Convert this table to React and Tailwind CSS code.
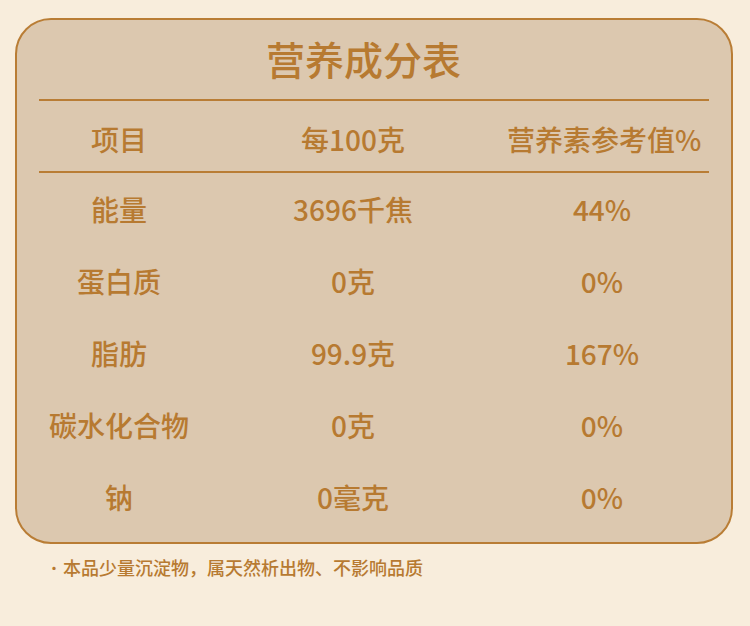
export default function App() {
  const rows = [
    ["能量", "3696千焦", "44%"],
    ["蛋白质", "0克", "0%"],
    ["脂肪", "99.9克", "167%"],
    ["碳水化合物", "0克", "0%"],
    ["钠", "0毫克", "0%"],
  ];
  const font = { fontFamily: '"Noto Sans CJK SC", "Noto Sans", sans-serif' };
  return (
    <div
      className="w-[750px] h-[626px] bg-[#f8eddc] pt-[18px] px-[15px] text-[#b77a31]"
      style={font}
    >
      <div className="w-[718px] border-2 border-[#b97d35] bg-[#dcc8af] rounded-[36px]">
        <div className="h-[79px] pb-[3px] pr-[21px] flex items-center justify-center text-[39px] font-medium leading-none whitespace-nowrap">
          营养成分表
        </div>
        <div className="mx-[22px] h-[2px] bg-[#b97d35]" />
        <div className="mx-[22px] h-[70px] pt-[5px] grid grid-cols-[160px_308px_190px] items-center text-[28px] font-medium leading-none whitespace-nowrap">
          <div className="text-center">项目</div>
          <div className="text-center">每100克</div>
          <div className="text-center">营养素参考值%</div>
        </div>
        <div className="mx-[22px] h-[2px] bg-[#b97d35]" />
        <div className="mx-[22px] pt-0 pb-[9px] flex flex-col">
          {rows.map((r) => (
            <div
              key={r[0]}
              className="h-[72px] grid grid-cols-[160px_308px_190px] items-center text-[28px] font-medium leading-none whitespace-nowrap"
            >
              <div className="text-center">{r[0]}</div>
              <div className="text-center">{r[1]}</div>
              <div className="text-center">{r[2]}</div>
            </div>
          ))}
        </div>
      </div>
      <div className="mt-[11px] pl-[32px] text-[18px] leading-[24px] font-medium flex items-center whitespace-nowrap">
        <span className="mr-[2px] text-[14px]">·</span>
        <span>本品少量沉淀物，属天然析出物、不影响品质</span>
      </div>
    </div>
  );
}
